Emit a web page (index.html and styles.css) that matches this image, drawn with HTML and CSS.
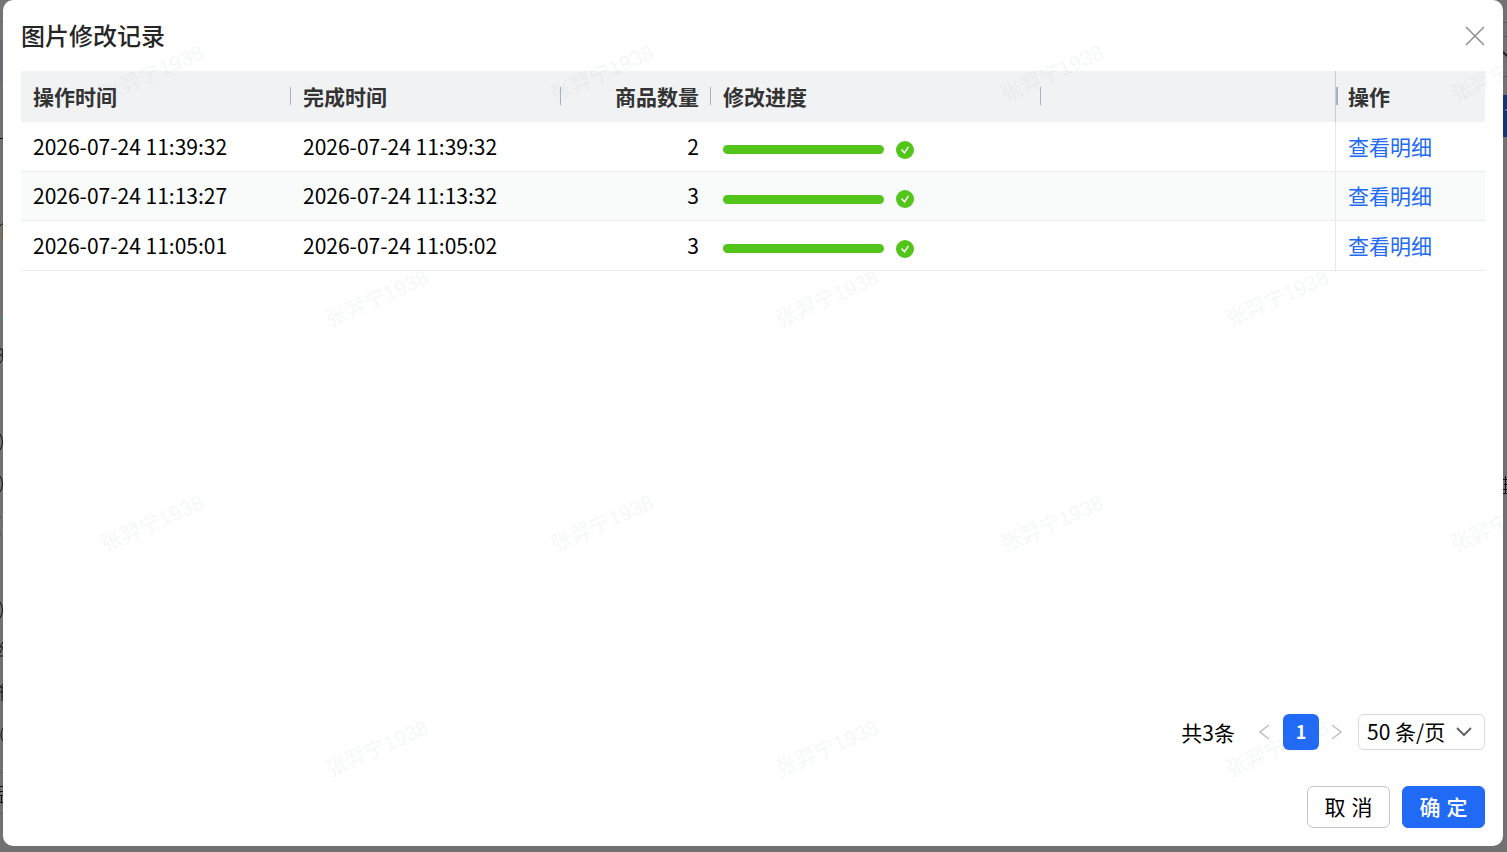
FILE: index.html
```html
<!DOCTYPE html>
<html lang="zh-CN">
<head>
<meta charset="utf-8">
<title>图片修改记录</title>
<link rel="stylesheet" href="styles.css">
</head>
<body>
<div class="backdrop" aria-hidden="true">
  <svg class="edge edge-left" width="3" height="852">
    <rect width="3" height="40" fill="#747474"/>
    <rect y="40" width="3" height="42" fill="#6b6b74"/>
    <rect y="21" width="3" height="1" fill="#656565"/>
    <rect y="138" width="3" height="1" fill="#111"/>
    <path d="M0 226l2-2h1" stroke="#111" fill="none"/>
    <rect y="227" x="2" width="1" height="11" fill="#7a5a1c"/>
    <rect y="316" width="1" height="3" fill="#3f8a8a"/>
    <path d="M0 349h2l1 3-1 3H0m2 0 1 4-3 4" stroke="#111" fill="none"/>
    <path d="M0 434q5 8 0 16M0 476q5 8 0 16M0 602q5 8 0 16" stroke="#111" fill="none"/>
    <path d="M0 517h1M0 534h1" stroke="#234a70"/>
    <path d="M3 642l-3 5h3l-3 6M0 656h3M3 684l-3 3h3M0 692h3M2 687v14M3 728q-4 7 0 13" stroke="#111" fill="none"/>
    <path d="M0 772.500h3M0 813.500h3" stroke="#5b5b5b"/>
    <path d="M0 786.500h3M0 791.500h3M0 795.500h3M1.500 795v8M0 802.500h3" stroke="#111"/>
  </svg>
  <svg class="edge edge-right" width="4" height="852">
    <path d="M0 22.500h4M0 36.500h4M0 76.500h4" stroke="#5f5f5f"/>
    <path d="M0 52l4 4" stroke="#222" stroke-width="2"/>
    <rect y="95" width="4" height="42" fill="#12327a"/>
    <path d="M2 110h2" stroke="#8a96b0"/>
    <path d="M0 479.500h4M1 484.500h3M0 489.500h4M0 493.500h4M2.500 476v18" stroke="#111"/>
  </svg>
</div>

<main class="dialog" role="dialog" aria-labelledby="dialog-title">
  <header class="dialog-head">
    <h1 class="dialog-title" id="dialog-title">图片修改记录</h1>
    <button class="close" type="button" aria-label="关闭">
      <svg width="20" height="20" viewBox="0 0 20 20"><path d="M1 1l18 18M19 1L1 19"/></svg>
    </button>
  </header>

  <table class="records">
    <colgroup>
      <col class="col-time"><col class="col-time"><col class="col-count"><col class="col-progress"><col><col class="col-action">
    </colgroup>
    <thead>
      <tr><th>操作时间</th><th>完成时间</th><th class="num">商品数量</th><th>修改进度</th><td class="blank"></td><th class="action">操作</th></tr>
    </thead>
    <tbody>
      <tr>
        <td>2026-07-24 11:39:32</td><td>2026-07-24 11:39:32</td><td class="num">2</td>
        <td><div class="progress"><span class="bar"></span><svg class="done" width="18" height="18" viewBox="0 0 18 18"><circle cx="9" cy="9" r="9"/><path d="M5.500 8.500l3 3.300 4-6"/></svg></div></td>
        <td></td><td class="action"><a href="#">查看明细</a></td>
      </tr>
      <tr>
        <td>2026-07-24 11:13:27</td><td>2026-07-24 11:13:32</td><td class="num">3</td>
        <td><div class="progress"><span class="bar"></span><svg class="done" width="18" height="18" viewBox="0 0 18 18"><circle cx="9" cy="9" r="9"/><path d="M5.500 8.500l3 3.300 4-6"/></svg></div></td>
        <td></td><td class="action"><a href="#">查看明细</a></td>
      </tr>
      <tr>
        <td>2026-07-24 11:05:01</td><td>2026-07-24 11:05:02</td><td class="num">3</td>
        <td><div class="progress"><span class="bar"></span><svg class="done" width="18" height="18" viewBox="0 0 18 18"><circle cx="9" cy="9" r="9"/><path d="M5.500 8.500l3 3.300 4-6"/></svg></div></td>
        <td></td><td class="action"><a href="#">查看明细</a></td>
      </tr>
    </tbody>
  </table>

  <nav class="pager" aria-label="分页">
    <span class="total">共3条</span>
    <button class="page-arrow" type="button" aria-label="上一页"><svg width="12" height="16" viewBox="0 0 12 16"><path d="M10 1L1 8l9 7"/></svg></button>
    <button class="page-current" type="button">1</button>
    <button class="page-arrow" type="button" aria-label="下一页"><svg width="12" height="16" viewBox="0 0 12 16"><path d="M1 1l9 7-9 7"/></svg></button>
    <div class="size">
      <select class="size-select" aria-label="每页条数"><option>50 条/页</option></select>
      <svg class="size-arrow" width="16" height="10" viewBox="0 0 16 10"><path d="M1 1l7 7 7-7"/></svg>
    </div>
  </nav>

  <footer class="actions">
    <button class="btn" type="button"><span>取</span><span>消</span></button>
    <button class="btn btn-primary" type="button"><span>确</span><span>定</span></button>
  </footer>
</main>

<svg class="watermark" aria-hidden="true">
  <defs>
    <pattern id="mark" width="450" height="450" patternUnits="userSpaceOnUse">
      <g class="mark-text">
        <text transform="translate(155 80) rotate(-24)">张羿宁1938</text>
        <text transform="translate(380 305) rotate(-24)">张羿宁1938</text>
      </g>
    </pattern>
  </defs>
  <rect width="100%" height="100%" fill="url(#mark)"/>
</svg>
</body>
</html>
```

FILE: styles.css
```css
* { box-sizing: border-box; }

body {
  margin: 0;
  min-height: 100vh;
  display: flex;
  padding: 0 4px 6px 3px;
  background: #717171;
  color: #000;
  font: 21px/30px "Noto Sans CJK SC", sans-serif;
  overflow: hidden;
}

button, select { font: inherit; color: inherit; margin: 0; cursor: pointer; }
button { border: 0; padding: 0; background: none; }
svg path { fill: none; }

.backdrop { position: fixed; inset: 0; }
.edge { position: absolute; top: 0; }
.edge-left { left: 0; }
.edge-right { right: 0; }

.dialog {
  position: relative;
  flex: 1;
  display: flex;
  flex-direction: column;
  padding: 18px;
  background: #fff;
  border-radius: 10px;
}

.dialog-head {
  display: flex;
  justify-content: space-between;
  align-items: center;
  height: 36px;
  margin-bottom: 17px;
}
.dialog-title { margin: 0; padding-bottom: 2px; font-size: 24px; font-weight: 500; line-height: 34px; color: #262626; }
.close { display: flex; }
.close path { stroke: #8c8c8c; stroke-width: 1.5; }

.records { width: 100%; table-layout: fixed; border-collapse: separate; border-spacing: 0; }
.col-time { width: 270px; }
.col-count { width: 150px; }
.col-progress { width: 330px; }
.col-action { width: 150px; }
.records th, .records td { padding: 0 12px 2px; text-align: left; white-space: nowrap; }
.records thead th, .records .blank {
  height: 51px;
  background: #f1f2f4;
  color: #333;
  font-weight: 700;
}
.records thead th:not(.action) {
  background: linear-gradient(#a9b0c0, #a9b0c0) right 16px / 1px 18px no-repeat #f1f2f4;
}
.records thead .action {
  border-left: 1px solid #c8cbd0;
  background: linear-gradient(#a9b0c0, #a9b0c0) left 16px / 2px 18px no-repeat #f1f2f4;
}
.records tbody td { height: 50px; border-bottom: 1px solid #ebeced; }
.records tbody tr:nth-child(even) td { height: 49px; background: #f9fbfb; }
.records tbody .action { border-left: 1px solid #e6e7e8; }
.records .num { text-align: right; }
.records a { color: #216af5; text-decoration: none; }

.progress { display: flex; align-items: center; gap: 12px; padding-top: 8px; }
.bar { width: 161px; height: 9px; border-radius: 5px; background: #52c41a; }
.done circle { fill: #52c41a; }
.done path { stroke: #fff; stroke-width: 1.5; }

.pager { display: flex; align-items: center; justify-content: flex-end; margin-top: auto; height: 36px; }
.total { margin-right: 12px; }
.page-arrow { display: flex; justify-content: center; align-items: center; width: 36px; height: 36px; }
.page-arrow path { stroke: #bfbfbf; stroke-width: 1.5; }
.page-current {
  width: 36px;
  height: 36px;
  padding-bottom: 2px;
  border-radius: 6px;
  background: #216af5;
  color: #fff;
  font-size: 18px;
  font-weight: 700;
}
.size { position: relative; margin-left: 3px; }
.size-select {
  display: block;
  appearance: none;
  width: 127px;
  height: 36px;
  padding: 0 8px 2px;
  border: 1px solid #d9d9d9;
  border-radius: 6px;
  background: #fff;
}
.size-arrow { position: absolute; right: 13px; top: 13px; pointer-events: none; }
.size-arrow path { stroke: #666; stroke-width: 2; }

.actions { display: flex; justify-content: flex-end; gap: 12px; margin-top: 36px; }
.btn {
  display: flex;
  justify-content: center;
  align-items: center;
  gap: 6px;
  width: 83px;
  height: 42px;
  padding-bottom: 2px;
  border: 1px solid #c4c6ca;
  border-radius: 6px;
  background: #fff;
}
.btn-primary { border-color: #216af5; background: #216af5; color: #fff; font-weight: 500; box-shadow: 0 3px 0 #fafafa; }

.watermark { position: fixed; inset: 0; width: 100%; height: 100%; pointer-events: none; }
.mark-text {
  font: 21px "Liberation Sans", "Noto Sans CJK SC", sans-serif;
  fill: #788;
  fill-opacity: 0.07;
  text-anchor: middle;
}
```
